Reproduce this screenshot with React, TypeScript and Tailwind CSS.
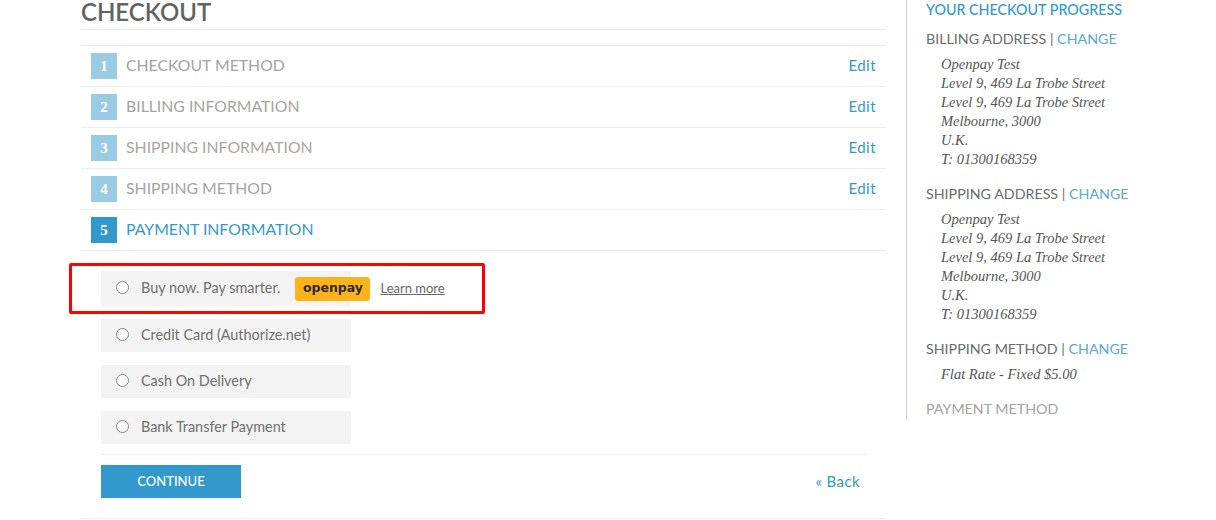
import React from "react";

const steps = [
  { n: 1, t: "CHECKOUT METHOD", c: "text-[#a3a3a3]" },
  { n: 2, t: "BILLING INFORMATION", c: "text-[#a8a3a0]" },
  { n: 3, t: "SHIPPING INFORMATION", c: "text-[#ada5a0]" },
  { n: 4, t: "SHIPPING METHOD", c: "text-[#a8a3a0]" },
];

const sans = "font-['Lato','Open_Sans',sans-serif]";
const serif = "font-['Liberation_Serif',serif]";

function Step({ n, t, c }: { n: number; t: string; c: string }) {
  return (
    <div className="flex h-[41px] items-center border-b border-[#ededed] pl-[10px] pr-[10px]">
      <span className={`flex h-[26px] w-[26px] items-center justify-center bg-[#9acbe5] text-[15px] font-bold text-white ${serif}`}>{n}</span>
      <span className={`ml-[9px] flex-1 pb-[3px] text-[15.8px] ${c}`}>{t}</span>
      <a className="pb-[1px] text-[15px] tracking-[0.45px] text-[#3399cc]">Edit</a>
    </div>
  );
}

function Radio({ className = "" }: { className?: string }) {
  return <span className={`h-[13px] w-[13px] shrink-0 rounded-full border border-[#858585] bg-white ${className}`} />;
}

function Option({ label }: { label: string }) {
  return (
    <div className="flex h-[33px] w-[250px] items-center bg-[#f3f3f3] pb-[2px] pl-[15px] text-[14.4px] text-[#70706f]">
      <Radio />
      <span className="ml-[12px] whitespace-nowrap">{label}</span>
    </div>
  );
}

function Address({ title, lines }: { title: string; lines: string[] }) {
  return (
    <div className="mb-[15px]">
      <div className="text-[14.25px] leading-[20px] text-[#6b6b6b]">
        {title} | <span className="text-[#5ea6d3]">CHANGE</span>
      </div>
      <div className={`mt-[6px] pl-[15px] text-[14.5px] italic leading-[19px] text-[#555] ${serif}`}>
        {lines.map((l, i) => (
          <div key={i}>{l}</div>
        ))}
      </div>
    </div>
  );
}

const addr = [
  "Openpay Test",
  "Level 9, 469 La Trobe Street",
  "Level 9, 469 La Trobe Street",
  "Melbourne, 3000",
  "U.K.",
  "T: 01300168359",
];

export default function App() {
  return (
    <div className={`flex h-[520px] w-[1216px] overflow-hidden bg-white pl-[81px] ${sans}`}>
      <main className="w-[805px] shrink-0">
        <h1 className="h-[30px] border-b border-[#ededed] text-[24px] font-semibold leading-[24px] text-[#636363]">CHECKOUT</h1>
        <div className="mt-[15px] border-t border-[#ededed]">
          {steps.map((s) => (
            <Step key={s.n} {...s} />
          ))}
          <div className="flex h-[41px] items-center border-b border-[#ededed] pl-[10px]">
            <span className={`flex h-[26px] w-[26px] items-center justify-center bg-[#3399cc] text-[15px] font-bold text-white ${serif}`}>5</span>
            <span className="ml-[9px] pb-[3px] text-[15.8px] text-[#3399cc]">PAYMENT INFORMATION</span>
          </div>
        </div>
        <div className="pl-[20px] pr-[20px]">
          <div className="relative mt-[20px] flex h-[35px] w-[250px] items-center bg-[#f3f3f3] pl-[15px] text-[14.4px] text-[#70706f]">
            <Radio className="mb-[3px]" />
            <span className="mb-[2px] ml-[12px] whitespace-nowrap">Buy now. Pay smarter.</span>
            <span className="ml-[15px] flex h-[24px] w-[75px] shrink-0 items-center justify-center rounded-[3px] bg-[#ffb31a] font-['DejaVu_Sans',sans-serif] text-[12.5px] font-bold text-[#2b2b2b]">openpay</span>
            <a className="ml-[10px] whitespace-nowrap text-[13px] text-[#666] underline">Learn more</a>
            <div className="absolute left-[-32px] top-[-8px] h-[51px] w-[416px] rounded-[2px] border-[3px] border-[#ff0000]" />
          </div>
          <div className="mt-[13px] flex flex-col gap-[13px]">
            <Option label="Credit Card (Authorize.net)" />
            <Option label="Cash On Delivery" />
            <Option label="Bank Transfer Payment" />
          </div>
          <div className="mt-[10px] flex items-center justify-between border-t border-[#ededed] pt-[10px]">
            <button className="h-[33px] w-[140px] bg-[#3399cc] text-[13px] font-medium text-white">CONTINUE</button>
            <a className="mr-[6px] text-[15px] tracking-[0.4px] text-[#3399cc]">« Back</a>
          </div>
        </div>
        <div className="mt-[20px] border-t border-[#ededed]" />
      </main>
      <aside className="ml-[20px] h-[419px] w-[270px] border-l border-[#cccccc] pl-[19px] pt-[1px]">
        <div className="pb-[10px] text-[14.3px] font-medium leading-[18px] text-[#3399cc]">YOUR CHECKOUT PROGRESS</div>
        <Address title="BILLING ADDRESS" lines={addr} />
        <Address title="SHIPPING ADDRESS" lines={addr} />
        <Address title="SHIPPING METHOD" lines={["Flat Rate - Fixed $5.00"]} />
        <div className="text-[14.25px] leading-[20px] text-[#a3a3a3]">PAYMENT METHOD</div>
      </aside>
    </div>
  );
}
